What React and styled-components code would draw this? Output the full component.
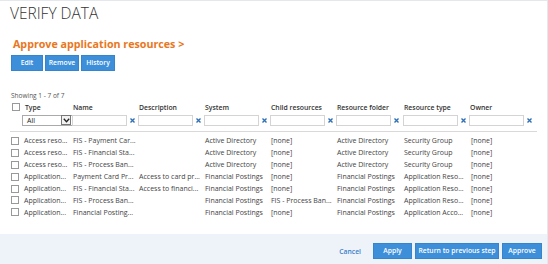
import React from 'react'
import styled, { createGlobalStyle } from 'styled-components'

const GlobalStyle = createGlobalStyle`
  body {
    margin: 0;
    background: #ffffff;
    font-family: 'Open Sans', 'Liberation Sans', sans-serif;
  }
`

const rows = [
    ['Access reso...', 'FIS - Payment Car...', '', 'Active Directory', '[none]', 'Active Directory', 'Security Group', '[none]'],
    ['Access reso...', 'FIS - Financial Sta...', '', 'Active Directory', '[none]', 'Active Directory', 'Security Group', '[none]'],
    ['Access reso...', 'FIS - Process Ban...', '', 'Active Directory', '[none]', 'Active Directory', 'Security Group', '[none]'],
    ['Application...', 'Payment Card Pr...', 'Access to card pr...', 'Financial Postings', '[none]', 'Financial Postings', 'Application Reso...', '[none]'],
    ['Application...', 'FIS - Financial Sta...', 'Access to financi...', 'Financial Postings', '[none]', 'Financial Postings', 'Application Reso...', '[none]'],
    ['Application...', 'FIS - Process Ban...', '', 'Financial Postings', 'FIS - Process Ban...', 'Financial Postings', 'Application Reso...', '[none]'],
    ['Application...', 'Financial Posting...', '', 'Financial Postings', '[none]', 'Financial Postings', 'Application Acco...', '[none]'],
]

const headers = ['Name', 'Description', 'System', 'Child resources', 'Resource folder', 'Resource type', 'Owner']

export default function App() {
    return (
        <>
            <GlobalStyle />
            <Page>
                <Main>
                    <Title>VERIFY DATA</Title>
                    <SubTitle>Approve application resources &gt;</SubTitle>
                    <Toolbar>
                        <BlueButton $w={32}>Edit</BlueButton>
                        <BlueButton $w={34}>Remove</BlueButton>
                        <BlueButton $w={34}>History</BlueButton>
                    </Toolbar>
                    <Showing>Showing 1 - 7 of 7</Showing>

                    <Grid>
                        <HeadCell>
                            <Check />
                            <span>Type</span>
                        </HeadCell>
                        {headers.map(h => <HeadCell key={h}>{h}</HeadCell>)}

                        <FilterCell $first>
                            <Select>
                                <span>All</span>
                                <SelectArrow>
                                    <svg width="7" height="5" viewBox="0 0 7 5">
                                        <path d="M0.8 0.8 L3.5 3.8 L6.2 0.8" fill="none" stroke="#222" strokeWidth="1.3" />
                                    </svg>
                                </SelectArrow>
                            </Select>
                        </FilterCell>
                        {headers.map(h => (
                            <FilterCell key={h}>
                                <FilterInput />
                                <ClearIcon>
                                    <svg width="5" height="5" viewBox="0 0 5 5">
                                        <path d="M0.5 0.5 L4.5 4.5 M4.5 0.5 L0.5 4.5" stroke="#2f6fb5" strokeWidth="1.4" />
                                    </svg>
                                </ClearIcon>
                            </FilterCell>
                        ))}

                        <Divider />

                        {rows.map((r, i) => (
                            <React.Fragment key={i}>
                                <Cell>
                                    <Check />
                                    <span>{r[0]}</span>
                                </Cell>
                                {r.slice(1).map((c, j) => <Cell key={j}>{c}</Cell>)}
                            </React.Fragment>
                        ))}
                    </Grid>
                </Main>

                <Footer>
                    <LinkButton>Cancel</LinkButton>
                    <BlueButton $w={39}>Apply</BlueButton>
                    <BlueButton $w={84}>Return to previous step</BlueButton>
                    <BlueButton $w={40}>Approve</BlueButton>
                </Footer>
            </Page>
        </>
    )
}

const Page = styled.div`
width: 547px;
height: 263px;
border-top: 1px solid #e4e7ec;
border-right: 1px solid #e4e7ec;
border-bottom: 1px solid #e4e7ec;
display: flex;
flex-direction: column;
background: #fff;
`

const Main = styled.div`
flex: 1;
padding: 0 0 0 11px;
`

const Title = styled.h1`
margin: 2px 0 0 -1px;
font-size: 15.5px;
font-weight: 300;
color: #333;
line-height: 20px;
`

const SubTitle = styled.h2`
margin: 13px 0 0 2px;
font-size: 10.7px;
font-weight: 700;
color: #e87722;
line-height: 16px;
`

const Toolbar = styled.div`
display: flex;
gap: 2px;
margin-top: 3px;
`

const BlueButton = styled.button`
width: ${p => p.$w}px;
height: 16px;
padding: 0;
background: #3d8fd9;
border: 1px solid #3485cd;
color: #fff;
font-family: 'Open Sans', 'Liberation Sans', sans-serif;
font-weight: 600;
font-size: 6.8px;
line-height: 14px;
white-space: nowrap;
border-radius: 0;
`

const Showing = styled.div`
margin-top: 20px;
font-size: 6.5px;
color: #555;
line-height: 10px;
`

const Grid = styled.div`
display: grid;
grid-template-columns: 62px 66px 66px 66px 66px 67px 66px 66px;
width: 525px;
`

const HeadCell = styled.div`
display: flex;
align-items: center;
gap: 5px;
height: 12px;
font-size: 6.85px;
font-weight: 600;
color: #333;
white-space: nowrap;
&:first-child { padding-left: 1px; }
`

const Check = styled.span`
width: 6px;
height: 6px;
border: 1px solid #999;
background: #fff;
flex-shrink: 0;
`

const FilterCell = styled.div`
display: flex;
align-items: center;
height: 14px;
padding-left: ${p => p.$first ? '11px' : '0'};
margin-left: ${p => p.$first ? '0' : '-1px'};
margin-bottom: 4px;
`

const Select = styled.div`
width: 46px;
height: 9px;
border: 1px solid #aaa;
display: flex;
align-items: center;
justify-content: space-between;
padding-left: 4px;
font-size: 7px;
color: #222;
`

const SelectArrow = styled.span`
width: 8px;
height: 8px;
margin-right: 1px;
border: 1px solid #777;
display: flex;
align-items: center;
justify-content: center;
background: #f2f2f2;
`

const FilterInput = styled.div`
width: 53px;
height: 9px;
border: 1px solid #d4d4d4;
background: #fff;
`

const ClearIcon = styled.span`
display: flex;
margin-left: 3px;
`

const Divider = styled.div`
grid-column: 1 / -1;
border-top: 1px solid #d9d9d9;
margin: 0 -1px 3px -1px;
`

const Cell = styled.div`
display: flex;
align-items: center;
gap: 5px;
height: 11.9px;
font-size: 7px;
color: #444;
white-space: nowrap;
&:nth-child(8n + 17) { padding-left: 1px; }
`

const Footer = styled.div`
height: 30px;
background: #eef3fa;
display: flex;
align-items: center;
justify-content: flex-end;
gap: 3px;
padding: 4px 5px 0 0;
box-sizing: border-box;
`

const LinkButton = styled.button`
background: none;
border: none;
color: #3b7fc8;
font-family: 'Open Sans', 'Liberation Sans', sans-serif;
font-weight: 600;
font-size: 6.8px;
margin-right: 9px;
padding: 0;
`
